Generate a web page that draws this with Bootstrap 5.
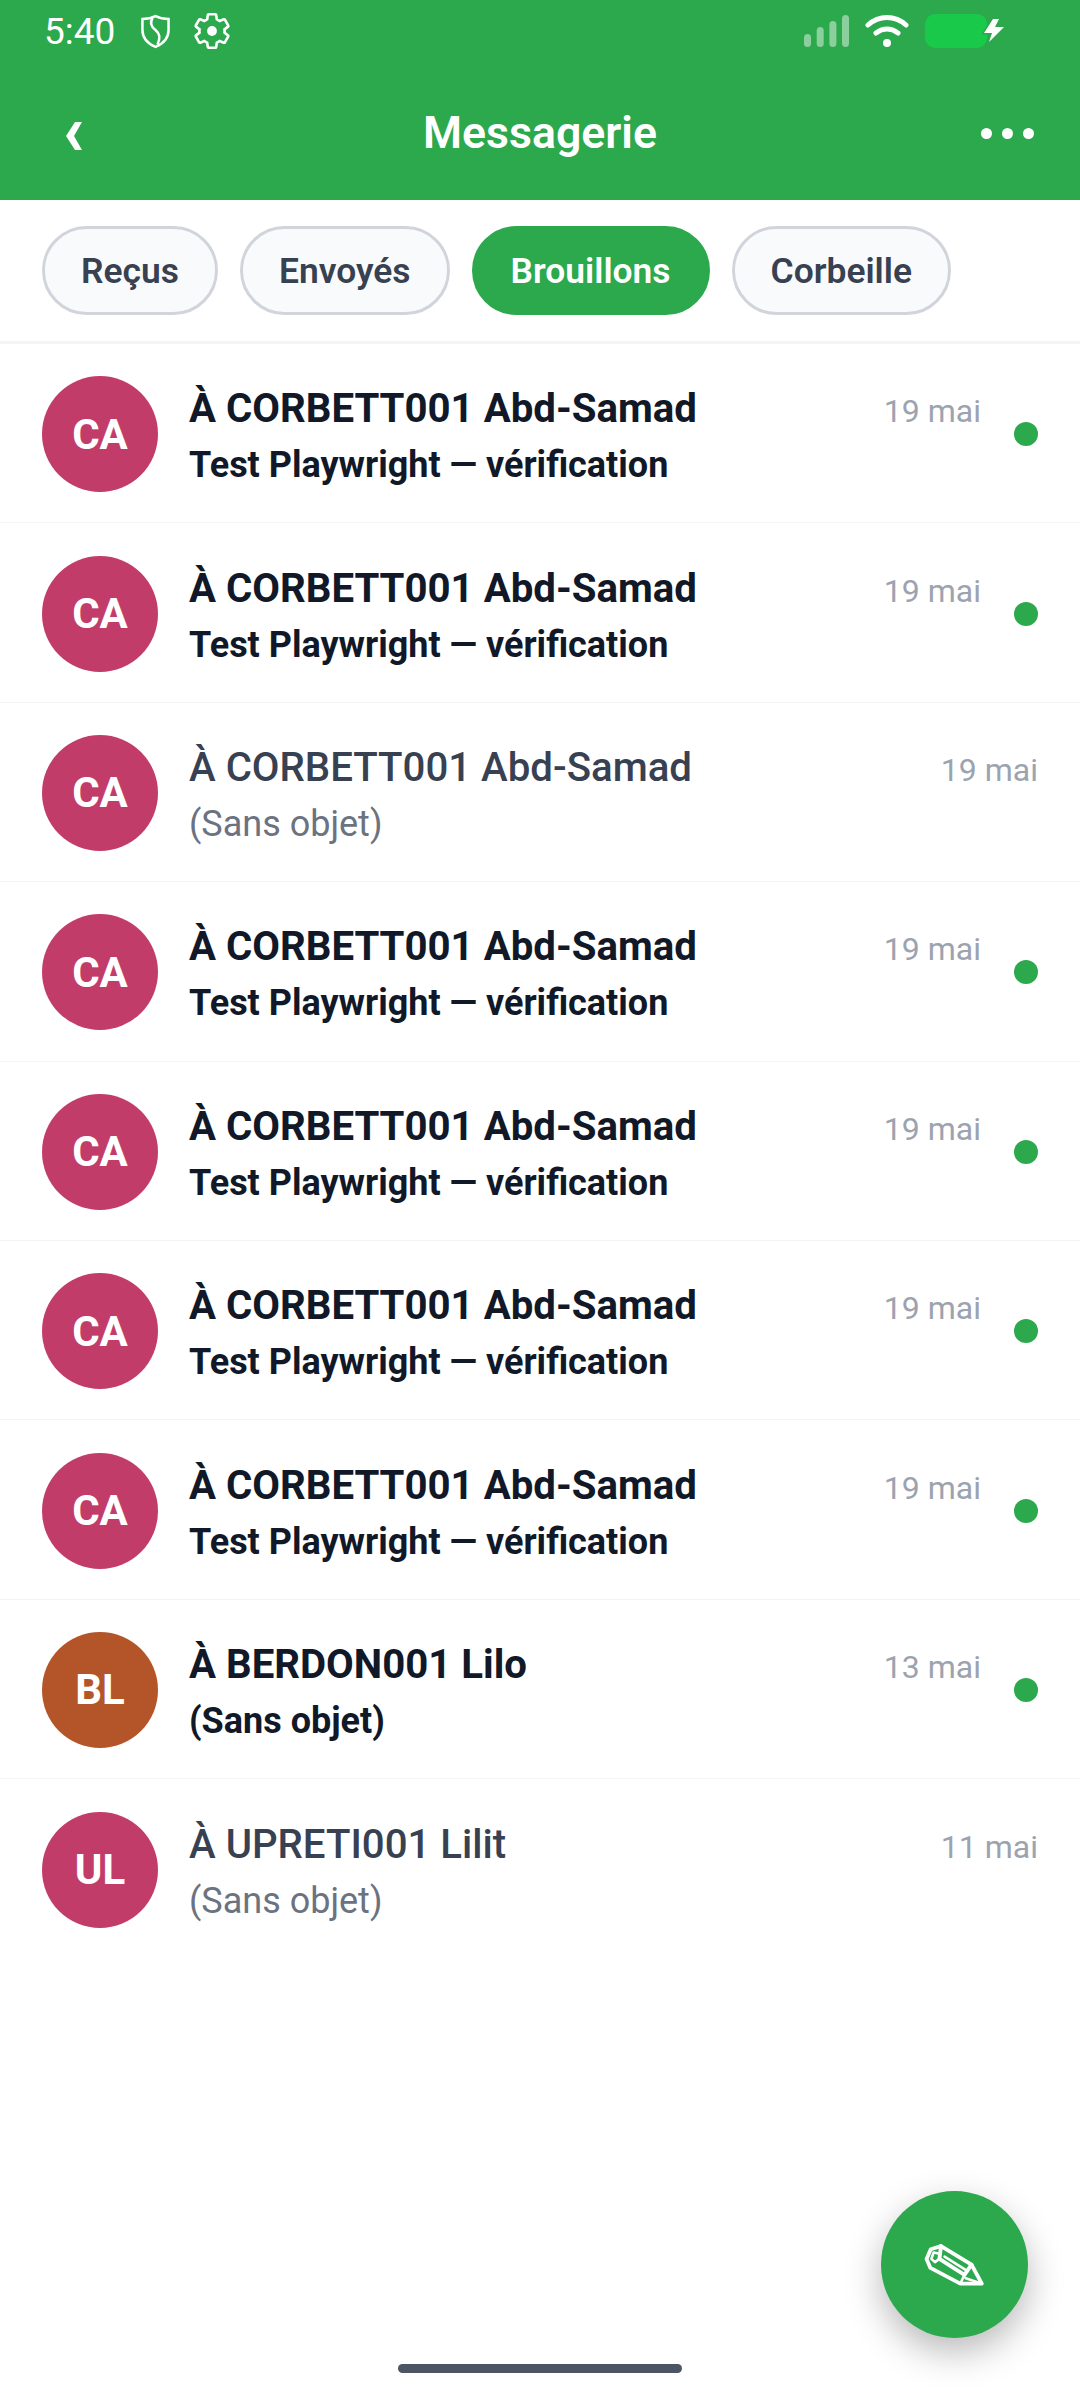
<!DOCTYPE html>
<html lang="fr">
<head>
    <meta charset="UTF-8">
    <meta name="viewport" content="width=device-width, initial-scale=1.0">
    <title>Messagerie</title>
    <link href="https://cdn.jsdelivr.net/npm/bootstrap@5.3.0/dist/css/bootstrap.min.css" rel="stylesheet">
    <style>
        body { font-family: Roboto, "Liberation Sans", sans-serif; background: #fff; width: 1080px; height: 2400px; overflow: hidden; position: relative; }
        .app-top { background: #2ca84d; height: 200px; color: #fff; }
        .status-bar { height: 66px; padding: 0 75px 4px 44px; }
        .status-time { font-size: 37px; line-height: 1; margin-right: 26px; }
        .shield-icon { margin-right: 21px; }
        .wifi-icon { margin-left: 16px; }
        .batt-icon { margin-left: 16px; }
        .title-bar { height: 134px; padding: 0 46px; }
        .title-side { width: 53px; }
        .back-icon { margin-left: 20px; margin-top: 5px; }
        .title-text { font-size: 44.6px; font-weight: 600; line-height: 1; }
        .tabs-bar { height: 144px; padding: 26px 42px 0; gap: 22px; border-bottom: 3px solid #f3f4f6; }
        .tab-pill { height: 89px; padding: 2px 36px 0; font-size: 35.4px; font-weight: 600; line-height: 1; color: #374151; background: #f9fafb; border: 3px solid #d1d5db; }
        .tab-pill.tab-on { background: #2ca84d; border-color: #2ca84d; color: #fff; }
        .msg-row { height: 179.4px; padding: 2px 42px 0; border: 0; border-bottom: 3px solid #f3f4f6; }
        .msg-row:last-child { border-bottom: 0; }
        .avatar-round { width: 116px; height: 116px; margin-right: 31px; font-size: 42px; font-weight: 700; color: #fff; }
        .av-pink { background: #c23c6a; }
        .av-brown { background: #b45529; }
        .msg-text { padding-top: 7px; }
        .msg-who { font-size: 40.2px; line-height: 56px; font-weight: 500; color: #374151; }
        .msg-subject { font-size: 36px; line-height: 57px; color: #6b7280; }
        .msg-date { font-size: 32px; line-height: 1; color: #9ca3af; margin-top: -46px; }
        .dot-unread { width: 24px; height: 24px; margin-left: 33px; background: #2ca84d; }
        .is-unread .msg-who { font-weight: 700; color: #111827; }
        .is-unread .msg-subject { font-weight: 700; color: #111827; }
        .fab-new { position: absolute; left: 881px; top: 2191px; width: 147px; height: 147px; background: #2ca84d; box-shadow: 0 14px 36px rgba(0,0,0,.28); }
        .fab-new:hover { background: #2ca84d; }
        .home-bar { position: absolute; left: 398px; top: 2364px; width: 284px; height: 9px; background: #4b5563; }
    </style>
</head>
<body>
<!-- Header -->
<header class="app-top">
    <div class="status-bar d-flex align-items-center">
        <span class="status-time">5:40</span>
        <svg width="29" height="35" viewBox="0 0 30 35" fill="none" stroke="#fff" stroke-width="2.6" class="shield-icon">
            <path d="M15 1.5C19 3.5 24 4.5 28.5 4.5V16C28.5 25 22 30.5 15 33.5C8 30.5 1.5 25 1.5 16V4.5C6 4.5 11 3.5 15 1.5Z"/>
            <path d="M12 3.5C9 8 10 12 15 16C20 20 20 25 17 31"/>
        </svg>
        <svg width="42" height="42" viewBox="0 0 24 24" fill="none" stroke="#fff" stroke-width="1.5">
            <path d="M19.14 12.94c.04-.3.06-.61.06-.94 0-.32-.02-.64-.07-.94l2.03-1.58c.18-.14.23-.41.12-.61l-1.92-3.32c-.12-.22-.37-.29-.59-.22l-2.39.96c-.5-.38-1.03-.7-1.62-.94l-.36-2.54c-.04-.24-.24-.41-.48-.41h-3.84c-.24 0-.43.17-.47.41l-.36 2.54c-.59.24-1.13.57-1.62.94l-2.39-.96c-.22-.08-.47 0-.59.22L2.74 8.87c-.12.21-.08.47.12.61l2.03 1.58c-.05.3-.09.63-.09.94s.02.64.07.94l-2.03 1.58c-.18.14-.23.41-.12.61l1.92 3.32c.12.22.37.29.59.22l2.39-.96c.5.38 1.03.7 1.62.94l.36 2.54c.05.24.24.41.48.41h3.84c.24 0 .44-.17.47-.41l.36-2.54c.59-.24 1.13-.56 1.62-.94l2.39.96c.22.08.47 0 .59-.22l1.92-3.32c.12-.22.07-.47-.12-.61l-2.01-1.58z"/>
            <circle cx="12" cy="12" r="2.8" fill="#fff" stroke="none"/>
        </svg>
        <div class="ms-auto d-flex align-items-center">
            <svg width="45" height="32" viewBox="0 0 45 32" fill="#fff" fill-opacity=".45">
                <rect x="0" y="19" width="7" height="13" rx="3.5"/>
                <rect x="12.7" y="12" width="7" height="20" rx="3.5"/>
                <rect x="25.4" y="6" width="7" height="26" rx="3.5"/>
                <rect x="38" y="0" width="7" height="32" rx="3.5"/>
            </svg>
            <svg width="44" height="33" viewBox="0 0 44 33" fill="none" stroke="#fff" stroke-width="5" stroke-linecap="round" class="wifi-icon">
                <path d="M3 10C14 0 30 0 41 10"/>
                <path d="M11 18C18 13 26 13 33 18"/>
                <circle cx="22" cy="28" r="4" fill="#fff" stroke="none"/>
            </svg>
            <svg width="80" height="34" viewBox="0 0 80 34" class="batt-icon">
                <rect x="0" y="0" width="62" height="34" rx="10" fill="#19c94a"/>
                <path d="M68 5L59 19H67L64 28L79 13H70L74 5Z" fill="#fff" stroke="#2ca84d" stroke-width="3" paint-order="stroke"/>
            </svg>
        </div>
    </div>
    <div class="title-bar d-flex align-items-center justify-content-between">
        <div class="title-side d-flex">
            <svg width="16" height="28" viewBox="0 0 16 28" fill="#fff" class="back-icon"><path d="M9 0H16L8 14L16 28H9L0 14Z"/></svg>
        </div>
        <span class="title-text">Messagerie</span>
        <svg width="53" height="11" viewBox="0 0 53 11" fill="#fff" class="title-side">
            <circle cx="5.5" cy="5.5" r="5.5"/><circle cx="26.5" cy="5.5" r="5.5"/><circle cx="47.5" cy="5.5" r="5.5"/>
        </svg>
    </div>
</header>

<!-- Tabs -->
<nav class="tabs-bar d-flex align-items-start">
    <button type="button" class="btn rounded-pill tab-pill">Reçus</button>
    <button type="button" class="btn rounded-pill tab-pill">Envoyés</button>
    <button type="button" class="btn rounded-pill tab-pill tab-on">Brouillons</button>
    <button type="button" class="btn rounded-pill tab-pill">Corbeille</button>
</nav>

<!-- Messages -->
<div id="msg-list" class="list-group list-group-flush"></div>

<button type="button" class="btn rounded-circle p-0 d-flex align-items-center justify-content-center fab-new" aria-label="Nouveau message">
    <svg width="61" height="44" viewBox="192 254 190 134" fill="none" stroke="#fff" stroke-width="12" stroke-linejoin="round" stroke-linecap="round">
        <path d="M213 272L245 262L340 320L372 379L305 379L212 330L200 302Z"/>
        <path d="M222 282L240 286L240 302L226 312L215 302Z" stroke-width="8"/>
        <path d="M245 262L240 302L318 352L340 320"/>
        <path d="M256 295L328 340" stroke-width="8"/>
        <path d="M318 352L305 379M322 362L372 379" stroke-width="8"/>
    </svg>
</button>
<div class="home-bar rounded-pill"></div>

<script src="https://cdn.jsdelivr.net/npm/bootstrap@5.3.0/dist/js/bootstrap.bundle.min.js"></script>
<script>
    const messages = [
        { ini: 'CA', who: 'À CORBETT001 Abd-Samad', sub: 'Test Playwright — vérification', date: '19 mai', unread: true },
        { ini: 'CA', who: 'À CORBETT001 Abd-Samad', sub: 'Test Playwright — vérification', date: '19 mai', unread: true },
        { ini: 'CA', who: 'À CORBETT001 Abd-Samad', sub: '(Sans objet)', date: '19 mai', unread: false },
        { ini: 'CA', who: 'À CORBETT001 Abd-Samad', sub: 'Test Playwright — vérification', date: '19 mai', unread: true },
        { ini: 'CA', who: 'À CORBETT001 Abd-Samad', sub: 'Test Playwright — vérification', date: '19 mai', unread: true },
        { ini: 'CA', who: 'À CORBETT001 Abd-Samad', sub: 'Test Playwright — vérification', date: '19 mai', unread: true },
        { ini: 'CA', who: 'À CORBETT001 Abd-Samad', sub: 'Test Playwright — vérification', date: '19 mai', unread: true },
        { ini: 'BL', who: 'À BERDON001 Lilo', sub: '(Sans objet)', date: '13 mai', unread: true, brown: true },
        { ini: 'UL', who: 'À UPRETI001 Lilit', sub: '(Sans objet)', date: '11 mai', unread: false }
    ];
    document.getElementById('msg-list').innerHTML = messages.map(m => `
        <div class="list-group-item d-flex align-items-center msg-row ${m.unread ? 'is-unread' : ''}">
            <div class="avatar-round rounded-circle flex-shrink-0 d-flex align-items-center justify-content-center ${m.brown ? 'av-brown' : 'av-pink'}">${m.ini}</div>
            <div class="flex-grow-1 msg-text">
                <div class="msg-who">${m.who}</div>
                <div class="msg-subject">${m.sub}</div>
            </div>
            <span class="msg-date">${m.date}</span>
            ${m.unread ? '<span class="dot-unread rounded-circle flex-shrink-0"></span>' : ''}
        </div>`).join('');
</script>
</body>
</html>
